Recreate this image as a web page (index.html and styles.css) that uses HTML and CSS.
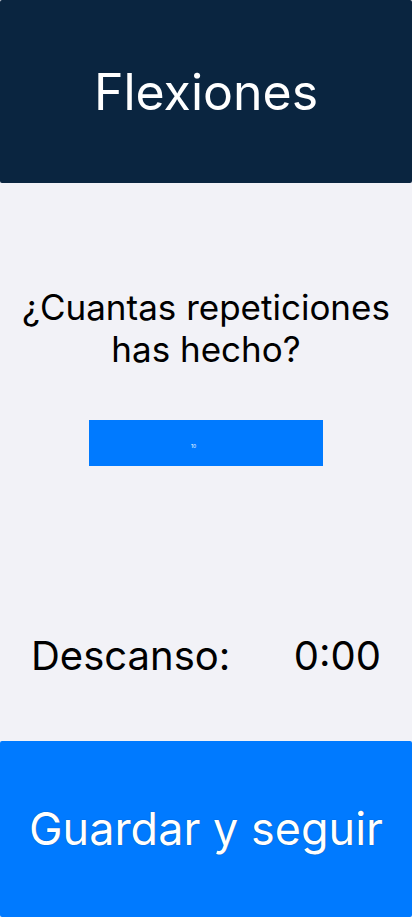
FILE: index.html
```html
<!DOCTYPE html>
<html lang="es">
<head>
<meta charset="utf-8">
<meta name="viewport" content="width=device-width, initial-scale=1">
<title>Flexiones</title>
<link rel="stylesheet" href="styles.css">
</head>
<body>
<form class="screen">
  <header class="header"><h1 class="title">Flexiones</h1></header>
  <main class="content">
    <label class="question" for="reps">¿Cuantas repeticiones has hecho?</label>
    <input class="reps" id="reps" type="text" inputmode="numeric" value="10">
    <p class="rest"><span>Descanso:</span><time>0:00</time></p>
  </main>
  <button class="save" type="button">Guardar y seguir</button>
</form>
</body>
</html>
```
FILE: styles.css
```css
* {
  box-sizing: border-box;
}

body {
  margin: 0;
  background: #f2f2f7;
  color: #000;
  font-family: Inter, sans-serif;
}

.screen {
  display: flex;
  flex-direction: column;
  min-height: 100vh;
}

.header {
  padding: 62px 16px 60px;
  border-radius: 2px;
  background: #0a2540;
  color: #fff;
  text-align: center;
}

.title {
  margin: 0;
  font-size: 50px;
  font-weight: 400;
  line-height: 61px;
}

.content {
  flex: 1;
  display: flex;
  flex-direction: column;
  align-items: center;
  padding: 103px 16px 55px;
}

.question {
  font-size: 35px;
  line-height: 42px;
  text-align: center;
}

.reps {
  width: 234px;
  height: 46px;
  margin-top: 50px;
  padding: 6px 0 0 102px;
  border: 0;
  border-radius: 0;
  background: #007aff;
  color: #fff;
  font-family: inherit;
  font-size: 5px;
}

.rest {
  display: flex;
  justify-content: space-between;
  width: 100%;
  margin: auto 0 0;
  padding: 0 15px;
  font-size: 40px;
  line-height: 60px;
}

.save {
  padding: 58px 16px;
  border: 0;
  border-radius: 2px;
  background: #007aff;
  color: #fff;
  font-family: inherit;
  font-size: 45px;
  line-height: 60px;
  text-shadow: 0 0 1px rgba(0, 0, 0, 0.5);
}
```
